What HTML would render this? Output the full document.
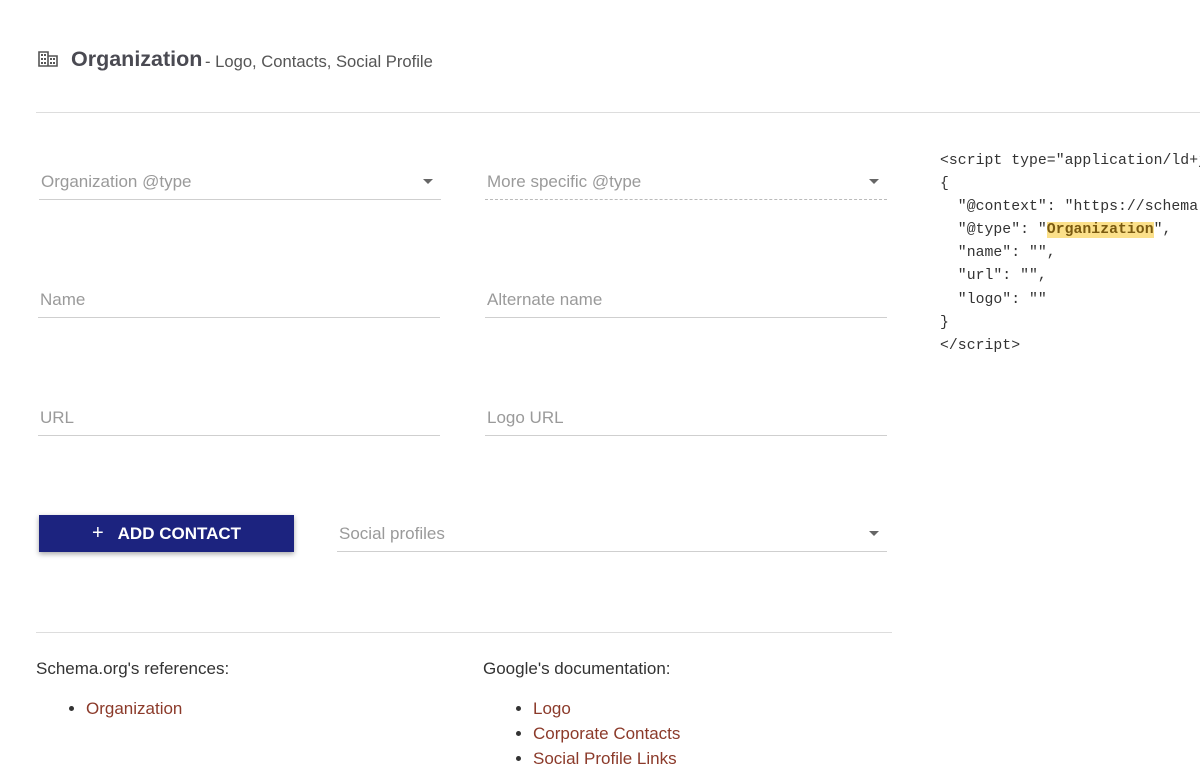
<!DOCTYPE html>
<html><head><meta charset="utf-8"><style>
body{margin:0;width:1200px;height:761px;overflow:hidden;background:#fff;font-family:"Liberation Sans",sans-serif;position:relative}
.a{position:absolute}
.f{position:absolute;border-bottom:1px solid #cfcfcf;color:#9a9a9a;font-size:17px;height:28px}
.f span{position:absolute;left:2px;top:1px}
.dd:after{content:"";position:absolute;right:8px;top:8px;border-left:5px solid transparent;border-right:5px solid transparent;border-top:5px solid #666}
.code{position:absolute;left:940px;top:150px;font-family:"Liberation Mono",monospace;font-size:14.8px;letter-spacing:0.02px;line-height:23.1px;color:#333;white-space:pre}
.code b{background:#fbe08a;color:#7a5a10}
a{color:#8b3a2a;text-decoration:none}
ul{margin:0;padding-left:50px;position:absolute;font-size:17px;line-height:25px;color:#333}
</style></head><body>
<svg class="a" style="left:38px;top:51px" width="20" height="16" viewBox="0 0 20 16"><path d="M1 1h9v14H1z M10 5h9v10h-9" fill="none" stroke="#555" stroke-width="1.6"/><path d="M3 3h2v2H3zM6 3h2v2H6zM3 7h2v2H3zM6 7h2v2H6zM3 11h2v2H3zM6 11h2v2H6zM12 7h2v2h-2zM15 7h2v2h-2zM12 11h2v2h-2zM15 11h2v2h-2z" fill="#555"/></svg>
<div class="a" style="left:71px;top:47px;font-size:21.5px;font-weight:bold;color:#4a4a52">Organization</div>
<div class="a" style="left:205px;top:52px;font-size:16.6px;color:#555">- Logo, Contacts, Social Profile</div>
<div class="a" style="left:36px;top:112px;width:1164px;border-top:1px solid #ddd"></div>
<div class="f dd" style="left:39px;top:171px;width:402px"><span>Organization @type</span></div>
<div class="f dd" style="left:485px;top:171px;width:402px;border-bottom:1px dashed #bbb"><span>More specific @type</span></div>
<div class="f" style="left:38px;top:289px;width:402px"><span>Name</span></div>
<div class="f" style="left:485px;top:289px;width:402px"><span>Alternate name</span></div>
<div class="f" style="left:38px;top:407px;width:402px"><span>URL</span></div>
<div class="f" style="left:485px;top:407px;width:402px"><span>Logo URL</span></div>
<div class="a" style="left:39px;top:515px;width:255px;height:37px;background:#1c237f;box-shadow:0 2px 5px rgba(0,0,0,.35);color:#fff;font-size:17px;font-weight:bold;line-height:37px;text-align:center"><span style="font-weight:normal;font-size:20px;margin-right:14px">+</span>ADD CONTACT</div>
<div class="f dd" style="left:337px;top:523px;width:550px"><span>Social profiles</span></div>
<div class="a" style="left:36px;top:632px;width:856px;border-top:1px solid #ddd"></div>
<div class="a" style="left:36px;top:659px;font-size:17px;color:#333">Schema.org's references:</div>
<div class="a" style="left:483px;top:659px;font-size:17px;color:#333">Google's documentation:</div>
<ul style="left:36px;top:696px"><li><a>Organization</a></li></ul>
<ul style="left:483px;top:696px"><li><a>Logo</a></li><li><a>Corporate Contacts</a></li><li><a>Social Profile Links</a></li></ul>
<div class="code">&lt;script type="application/ld+json"&gt;
{
  "@context": "https://schema.org",
  "@type": "<b>Organization</b>",
  "name": "",
  "url": "",
  "logo": ""
}
&lt;/script&gt;</div>
</body></html>
